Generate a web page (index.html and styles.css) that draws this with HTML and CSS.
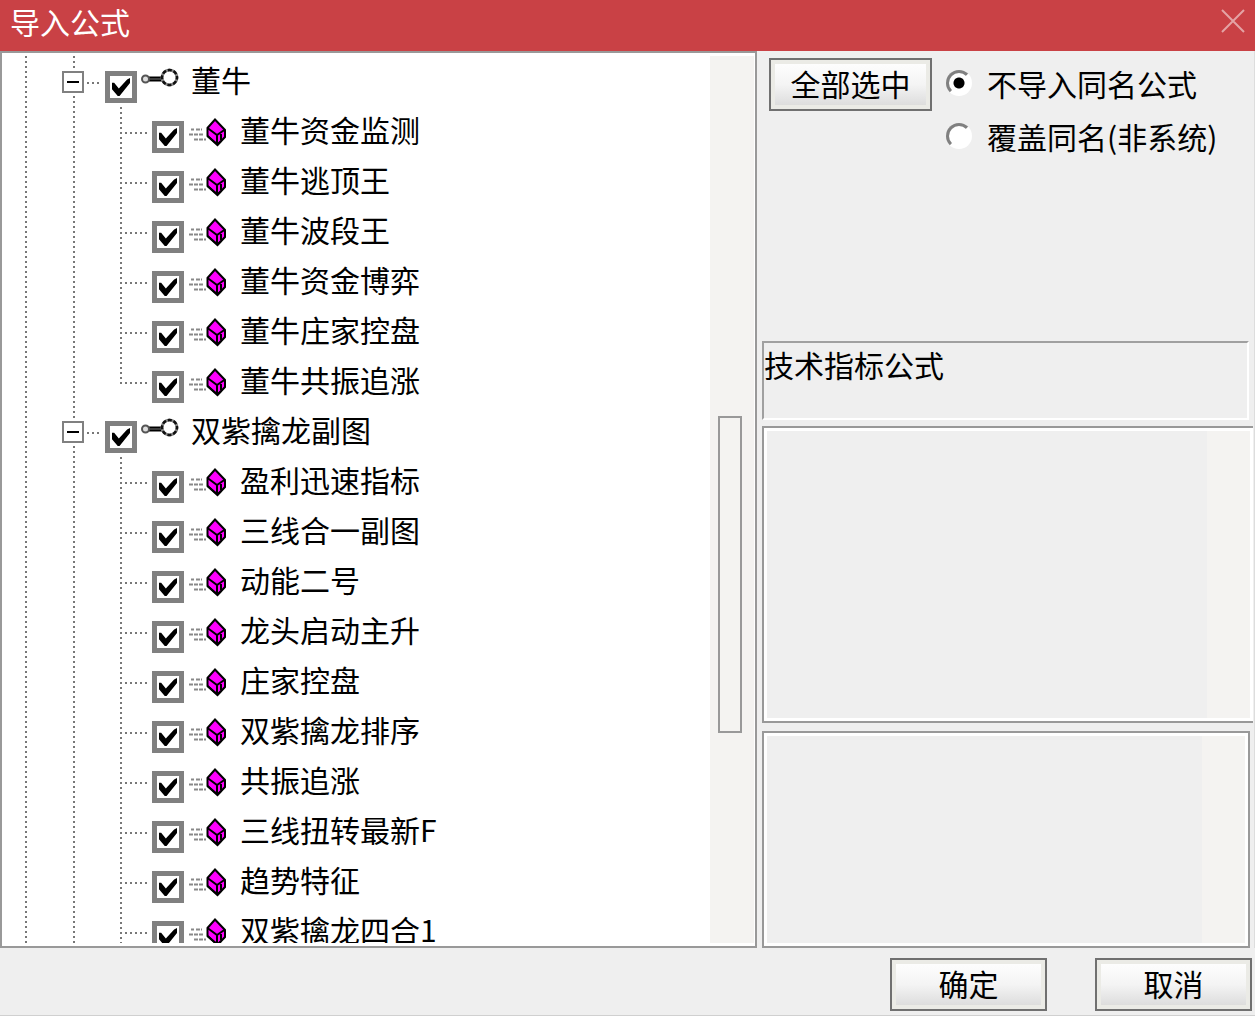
FILE: index.html
```
<!DOCTYPE html>
<html lang="zh-CN">
<head>
    <meta charset="UTF-8">
    <meta name="viewport" content="width=device-width, initial-scale=1.0">
    <title>导入公式</title>
    <link rel="stylesheet" href="styles.css">
</head>
<body>
    <!-- 图标 -->
    <svg class="icon-defs" aria-hidden="true">
        <symbol id="icon-key" viewBox="0 0 38 22">
            <path d="M7 11H21" stroke="#000" stroke-width="5"/>
            <path d="M9 11H20" stroke="#777" stroke-width="1"/>
            <circle cx="4.5" cy="11" r="3.5" fill="#ddd" stroke="#555" stroke-width="2"/>
            <circle cx="28.5" cy="9.5" r="7.5" fill="#fff" stroke="#888" stroke-width="3"/>
            <circle cx="28.5" cy="9.5" r="7.5" fill="none" stroke="#111" stroke-width="2.5" stroke-dasharray="4 1.9" stroke-dashoffset="2"/>
        </symbol>
        <symbol id="icon-formula" viewBox="0 0 40 30">
            <path d="M3 12.5h3M8 12.5h6M1 17.5h4M6 17.5h9M6 22.5h12" stroke="#888" stroke-width="2" stroke-dasharray="4 1"/>
            <path d="M27 2.5L37 13V20L29.5 28L19.5 19V11Z" fill="#f0f" stroke="#000" stroke-width="2"/>
            <path d="M19.5 11L29 18L37 12.5M29 18V28M33 17V23M19.5 19L29.5 27.5L33 24" fill="none" stroke="#000" stroke-width="2"/>
        </symbol>
    </svg>

    <div class="dialog">
        <header class="titlebar">
            <h1>导入公式</h1>
            <button type="button" class="close" aria-label="关闭">
                <svg viewBox="0 0 24 24"><path d="M1 1L23 23M23 1L1 23" stroke="#e4a3a5" stroke-width="2"/></svg>
            </button>
        </header>

        <main class="content">
            <section class="tree-panel">
                <ul class="tree">
                    <li>
                        <div class="group">
                            <button type="button" class="expander" aria-label="折叠"></button>
                            <label class="node"><input type="checkbox" checked><svg class="icon"><use href="#icon-key"/></svg><span>董牛</span></label>
                        </div>
                        <ul class="leaves">
                            <li><label class="node"><input type="checkbox" checked><svg class="icon"><use href="#icon-formula"/></svg><span>董牛资金监测</span></label></li>
                            <li><label class="node"><input type="checkbox" checked><svg class="icon"><use href="#icon-formula"/></svg><span>董牛逃顶王</span></label></li>
                            <li><label class="node"><input type="checkbox" checked><svg class="icon"><use href="#icon-formula"/></svg><span>董牛波段王</span></label></li>
                            <li><label class="node"><input type="checkbox" checked><svg class="icon"><use href="#icon-formula"/></svg><span>董牛资金博弈</span></label></li>
                            <li><label class="node"><input type="checkbox" checked><svg class="icon"><use href="#icon-formula"/></svg><span>董牛庄家控盘</span></label></li>
                            <li><label class="node"><input type="checkbox" checked><svg class="icon"><use href="#icon-formula"/></svg><span>董牛共振追涨</span></label></li>
                        </ul>
                    </li>
                    <li>
                        <div class="group">
                            <button type="button" class="expander" aria-label="折叠"></button>
                            <label class="node"><input type="checkbox" checked><svg class="icon"><use href="#icon-key"/></svg><span>双紫擒龙副图</span></label>
                        </div>
                        <ul class="leaves more">
                            <li><label class="node"><input type="checkbox" checked><svg class="icon"><use href="#icon-formula"/></svg><span>盈利迅速指标</span></label></li>
                            <li><label class="node"><input type="checkbox" checked><svg class="icon"><use href="#icon-formula"/></svg><span>三线合一副图</span></label></li>
                            <li><label class="node"><input type="checkbox" checked><svg class="icon"><use href="#icon-formula"/></svg><span>动能二号</span></label></li>
                            <li><label class="node"><input type="checkbox" checked><svg class="icon"><use href="#icon-formula"/></svg><span>龙头启动主升</span></label></li>
                            <li><label class="node"><input type="checkbox" checked><svg class="icon"><use href="#icon-formula"/></svg><span>庄家控盘</span></label></li>
                            <li><label class="node"><input type="checkbox" checked><svg class="icon"><use href="#icon-formula"/></svg><span>双紫擒龙排序</span></label></li>
                            <li><label class="node"><input type="checkbox" checked><svg class="icon"><use href="#icon-formula"/></svg><span>共振追涨</span></label></li>
                            <li><label class="node"><input type="checkbox" checked><svg class="icon"><use href="#icon-formula"/></svg><span>三线扭转最新F</span></label></li>
                            <li><label class="node"><input type="checkbox" checked><svg class="icon"><use href="#icon-formula"/></svg><span>趋势特征</span></label></li>
                            <li><label class="node"><input type="checkbox" checked><svg class="icon"><use href="#icon-formula"/></svg><span>双紫擒龙四合1</span></label></li>
                        </ul>
                    </li>
                </ul>
                <div class="scrollbar"><div class="thumb"></div></div>
            </section>

            <section class="side">
                <div class="options">
                    <button type="button" class="btn">全部选中</button>
                    <div class="radios">
                        <label><input type="radio" name="mode" checked><span>不导入同名公式</span></label>
                        <label><input type="radio" name="mode"><span>覆盖同名(非系统)</span></label>
                    </div>
                </div>
                <div class="kind">技术指标公式</div>
                <div class="box box-open">
                    <textarea aria-label="公式说明" readonly></textarea>
                    <div class="track"></div>
                </div>
                <div class="box">
                    <textarea aria-label="公式内容" readonly></textarea>
                    <div class="track"></div>
                </div>
            </section>
        </main>

        <footer class="actions">
            <button type="button" class="btn">确定</button>
            <button type="button" class="btn">取消</button>
        </footer>
    </div>
</body>
</html>
```
FILE: styles.css
```
* {
    box-sizing: border-box;
}
body {
    margin: 0;
    font-family: "Noto Sans CJK SC", sans-serif;
    font-size: 30px;
    line-height: 44px;
    color: #000;
    background: #efefef;
}
ul {
    list-style: none;
    margin: 0;
    padding: 0;
}
button, input, textarea {
    font: inherit;
    margin: 0;
    padding: 0;
}
.icon-defs {
    position: absolute;
    width: 0;
    height: 0;
}
.dialog {
    display: flex;
    flex-direction: column;
    height: 100vh;
    border-bottom: 1px solid #d0d0d0;
}

/* 标题栏 */
.titlebar {
    display: flex;
    justify-content: space-between;
    align-items: center;
    height: 51px;
    flex: none;
    padding: 0 10px 10px;
    background: #c94145;
}
.titlebar h1 {
    margin: 0;
    font-size: 30px;
    font-weight: 400;
    line-height: 44px;
    color: #fff;
}
.close {
    width: 24px;
    height: 24px;
    border: none;
    background: none;
}
.close svg {
    display: block;
    width: 24px;
    height: 24px;
}

.content {
    display: grid;
    grid-template-columns: minmax(0, 757fr) minmax(0, 498fr);
    grid-template-rows: minmax(0, 1fr);
    flex: 1;
    min-height: 0;
}

/* 公式树 */
.tree-panel {
    display: flex;
    border: 2px solid #999;
    background: #fff;
    padding: 3px 1px 3px 0;
    overflow: hidden;
}
.tree {
    --dots-y: repeating-linear-gradient(to bottom, #777 0 2px, transparent 2px 5px);
    --dots-x: repeating-linear-gradient(to right, #777 0 2px, transparent 2px 5px);
    flex: 1;
    overflow: hidden;
    padding-top: 1px;
    background-image: var(--dots-y), var(--dots-y);
    background-size: 2px 100%;
    background-position: 23px 0, 71px 0;
    background-repeat: no-repeat;
}
.group {
    display: flex;
    align-items: center;
    height: 50px;
    padding-left: 60px;
}
.expander {
    width: 22px;
    height: 22px;
    border: 2px solid #808080;
    background: linear-gradient(#000, #000) center / 12px 2px no-repeat #fff;
    outline: 3px solid #fff;
    margin-right: 3px;
}
.node {
    display: flex;
    align-items: center;
    height: 50px;
    white-space: nowrap;
}
.node span {
    padding-bottom: 6px;
}
.group .node {
    padding-left: 18px;
    background: var(--dots-x) 0 25px / 15px 2px no-repeat;
}
.leaves li {
    padding-left: 118px;
    background: var(--dots-y) 118px 0 / 2px 100% no-repeat;
}
.leaves:not(.more) li:last-child {
    background-size: 2px 25px;
}
.leaves .node {
    padding-left: 32px;
    background: var(--dots-x) 0 25px / 27px 2px no-repeat;
}
.node input {
    appearance: none;
    width: 32px;
    height: 32px;
    margin-top: 10px;
    padding: 2px;
    border: 5px solid #808080;
    background: #fff;
}
.node input:checked::before {
    content: "";
    display: block;
    width: 18px;
    height: 18px;
    background: #000;
    clip-path: polygon(0 26%, 12% 26%, 38% 58%, 84% 8%, 100% 0, 100% 28%, 42% 100%, 32% 100%, 0 62%);
}
.icon {
    width: 40px;
    height: 30px;
    margin: 0 12px 0 4px;
}
.group .icon {
    width: 38px;
    height: 22px;
    margin-bottom: 6px;
}
.scrollbar {
    display: grid;
    grid-template-rows: 360fr 318fr 210fr;
    width: 44px;
    padding: 0 12px 0 8px;
    background: #f4f3f1;
}
.thumb {
    grid-row: 2;
    border: 2px solid #999;
}

/* 右侧 */
.side {
    display: flex;
    flex-direction: column;
    padding-left: 5px;
    border-right: 1px solid #ddd;
}
.options {
    display: flex;
    align-items: flex-start;
    height: 290px;
    flex: none;
    padding: 7px 0 0 7px;
}
.btn {
    height: 53px;
    border: 2px solid #707070;
    background: linear-gradient(#fff, #f4f4f4 50%, #dedede 90%, #dedcd0);
    box-shadow: inset 0 0 0 4px #ebebe6;
    padding-bottom: 4px;
    line-height: 44px;
    color: #000;
}
.options .btn {
    width: 163px;
}
.radios {
    margin-left: 14px;
}
.radios label {
    display: flex;
    align-items: center;
    height: 53px;
    padding-bottom: 4px;
    white-space: nowrap;
}
.radios input {
    appearance: none;
    width: 26px;
    height: 26px;
    margin-right: 15px;
    border: 3px solid;
    border-color: #808080 #fff #fff #808080;
    border-radius: 50%;
    background: #fff;
}
.radios input:checked {
    background: radial-gradient(circle, #000 5px, #fff 6px);
}
.kind {
    height: 79px;
    flex: none;
    margin-right: 5px;
    border: 2px solid #fff;
    border-top-color: #a0a0a0;
    border-left-color: #a0a0a0;
    line-height: 42px;
}
.box {
    display: flex;
    flex: 207 1 0;
    min-height: 0;
    margin: 8px 4px 0 0;
    border: 2px solid #999;
    background: #fff;
    padding: 3px;
}
.box-open {
    flex-grow: 287;
    margin: 6px 1px 0 0;
    border-right: none;
}
.box textarea {
    flex: 1;
    min-width: 0;
    border: none;
    resize: none;
    outline: none;
    background: #efefef;
}
.track {
    width: 43px;
    background: #f4f3f1;
}

/* 底部按钮 */
.actions {
    display: flex;
    justify-content: flex-end;
    gap: 48px;
    flex: none;
    height: 67px;
    padding: 10px 3px 0 0;
}
.actions .btn {
    width: 157px;
}
```
